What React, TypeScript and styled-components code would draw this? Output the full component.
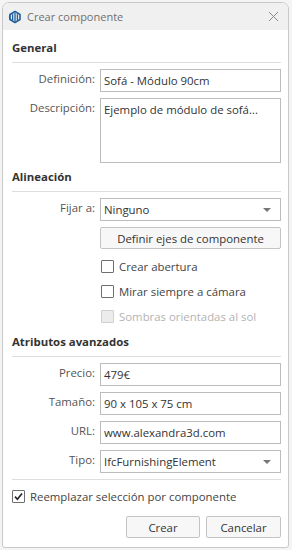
import React, { useState } from 'react';
import styled, { createGlobalStyle } from 'styled-components';

const GlobalStyle = createGlobalStyle`
  html, body {
    margin: 0;
    padding: 0;
    background: #f4f4f4;
  }
  body {
    font-family: "Open Sans", "Noto Sans", sans-serif;
    font-size: 11.4px;
    color: #333;
  }
  * { box-sizing: border-box; }
`;

const Window = styled.div`
  margin: 2px 3px 0 2px;
  width: 287px;
  height: 546px;
  border: 1px solid #c9c9c9;
  border-radius: 7px 7px 3px 3px;
  background: #fff;
  display: flex;
  flex-direction: column;
  overflow: hidden;
`;

const TitleBar = styled.div`
  height: 27px;
  flex-shrink: 0;
  background: #f0f0f0;
  display: flex;
  align-items: center;
  padding: 0 8px 0 5px;
  gap: 5px;
  color: #717171;
  font-size: 11px;
`;

const TitleText = styled.span`
  flex: 1;
`;

const CloseBtn = styled.span`
  width: 14px;
  height: 14px;
  display: flex;
  align-items: center;
  justify-content: center;
`;

const Body = styled.div`
  flex: 1;
  display: flex;
  flex-direction: column;
  padding: 10px 7px 9px 9px;
`;

const SectionTitle = styled.div<{ $top?: number }>`
  font-weight: 700;
  font-size: 11.4px;
  line-height: 16px;
  color: #333;
  padding-bottom: 6px;
  border-bottom: 1px solid #dedede;
  margin-top: ${({ $top }) => $top ?? 0}px;
  margin-bottom: 6px;
`;

const FormGrid = styled.div`
  display: grid;
  grid-template-columns: 83px 1fr;
  column-gap: 5px;
  row-gap: 6px;
`;

const Label = styled.div`
  text-align: right;
  color: #555;
  line-height: 16px;
  padding-top: 2px;
`;

const Field = styled.div<{ $h?: number }>`
  height: ${({ $h }) => $h ?? 23}px;
  border: 1px solid #bcbcbc;
  background: #fff;
  padding: 3px 3px 0;
  line-height: 16px;
  color: #333;
  display: flex;
  align-items: flex-start;
  white-space: nowrap;
  overflow: hidden;
`;

const SelectBox = styled(Field)`
  align-items: center;
  padding-top: 0;
  justify-content: space-between;
`;

const Caret = styled.span`
  width: 0;
  height: 0;
  border-left: 4px solid transparent;
  border-right: 4px solid transparent;
  border-top: 4px solid #777;
  margin-right: 6px;
`;

const PushButton = styled.div<{ $w?: number; $col?: number }>`
  height: 22px;
  ${({ $w }) => ($w ? `width: ${$w}px;` : '')}
  ${({ $col }) => ($col ? `grid-column: ${$col};` : '')}
  border: 1px solid #c4c4c4;
  border-radius: 2px;
  background: #f7f7f7;
  display: flex;
  align-items: center;
  justify-content: center;
  color: #333;
`;

const CheckRow = styled.label<{ $disabled?: boolean }>`
  height: 25px;
  display: flex;
  align-items: center;
  gap: 5px;
  padding-left: 1px;
  color: ${({ $disabled }) => ($disabled ? '#b3b3b3' : '#444')};
`;

const Box = styled.span<{ $disabled?: boolean }>`
  width: 13px;
  height: 13px;
  border: 1px solid ${({ $disabled }) => ($disabled ? '#d0d0d0' : '#6f6f6f')};
  background: ${({ $disabled }) => ($disabled ? '#ececec' : '#fff')};
  border-radius: 1px;
  display: flex;
  align-items: center;
  justify-content: center;
  flex-shrink: 0;
`;

const Checks = styled.div`
  grid-column: 2;
  margin-top: 5px;
  display: flex;
  flex-direction: column;
`;

const Divider = styled.div`
  border-top: 1px solid #dedede;
  margin-top: 6px;
`;

const ReplaceRow = styled.label`
  height: 24px;
  margin-top: 4px;
  display: flex;
  align-items: center;
  gap: 5px;
  color: #444;
`;

const Footer = styled.div`
  margin-top: 8px;
  display: flex;
  justify-content: flex-end;
  gap: 6px;
`;

const Logo = () => (
  <svg width="14" height="14" viewBox="0 0 14 14">
    <path d="M2 4.5 L7 1.5 L12 4.5 L12 9.5 L7 12.5 L2 9.5 Z" fill="none" stroke="#1f5f9c" strokeWidth="1.6" strokeLinejoin="round" />
    <path d="M4.6 4.3 L4.6 10 M7 3 L7 11.2 M9.4 4.3 L9.4 10" stroke="#1f5f9c" strokeWidth="1.3" />
    <path d="M2 4.5 Q0.8 7 2 9.5" fill="none" stroke="#1f5f9c" strokeWidth="1.2" />
  </svg>
);

const CheckMark = () => (
  <svg width="11" height="11" viewBox="0 0 11 11">
    <path d="M2 5.6 L4.4 8.2 L9 2.4" fill="none" stroke="#222" strokeWidth="1.6" />
  </svg>
);

const Check = ({ checked, disabled, label }: { checked?: boolean; disabled?: boolean; label: string }) => (
  <CheckRow $disabled={disabled}>
    <Box $disabled={disabled}>{checked && <CheckMark />}</Box>
    {label}
  </CheckRow>
);

const App: React.FC = () => {
  const [replace] = useState(true);

  return (
    <>
      <GlobalStyle />
      <Window>
        <TitleBar>
          <Logo />
          <TitleText>Crear componente</TitleText>
          <CloseBtn>
            <svg width="11" height="11" viewBox="0 0 11 11">
              <path d="M1 1 L10 10 M10 1 L1 10" stroke="#8a8a8a" strokeWidth="1" />
            </svg>
          </CloseBtn>
        </TitleBar>
        <Body>
          <SectionTitle>General</SectionTitle>
          <FormGrid>
            <Label>Definición:</Label>
            <Field>Sofá - Módulo 90cm</Field>
            <Label>Descripción:</Label>
            <Field $h={65}>Ejemplo de módulo de sofá...</Field>
          </FormGrid>

          <SectionTitle $top={6}>Alineación</SectionTitle>
          <FormGrid>
            <Label>Fijar a:</Label>
            <SelectBox>
              Ninguno
              <Caret />
            </SelectBox>
            <PushButton $col={2}>Definir ejes de componente</PushButton>
          </FormGrid>
          <FormGrid>
            <Checks>
              <Check label="Crear abertura" />
              <Check label="Mirar siempre a cámara" />
              <Check label="Sombras orientadas al sol" disabled />
            </Checks>
          </FormGrid>

          <SectionTitle $top={5}>Atributos avanzados</SectionTitle>
          <FormGrid>
            <Label>Precio:</Label>
            <Field>479€</Field>
            <Label>Tamaño:</Label>
            <Field>90 x 105 x 75 cm</Field>
            <Label>URL:</Label>
            <Field>www.alexandra3d.com</Field>
            <Label>Tipo:</Label>
            <SelectBox>
              IfcFurnishingElement
              <Caret />
            </SelectBox>
          </FormGrid>
          <Divider />

          <ReplaceRow>
            <Box>{replace && <CheckMark />}</Box>
            Reemplazar selección por componente
          </ReplaceRow>

          <Footer>
            <PushButton $w={74}>Crear</PushButton>
            <PushButton $w={75}>Cancelar</PushButton>
          </Footer>
        </Body>
      </Window>
    </>
  );
};

export default App;
